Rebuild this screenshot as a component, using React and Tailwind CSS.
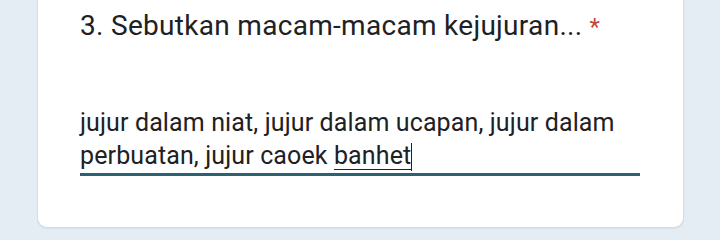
import React from "react";

function App() {
  return (
    <div className="w-[720px] h-[240px] bg-[#e3edf3] overflow-hidden" style={{ fontFamily: "Roboto, 'Liberation Sans', sans-serif" }}>
      <div className="ml-[37px] w-[647px] h-[228px] bg-white rounded-b-[10px] border border-t-0 border-[#d5dde2] shadow-[0_1px_1px_rgba(0,0,0,0.06)] pl-[42px] pr-[43px]">
        <div className="pt-[8px] text-[28px] leading-[36px] text-[#202124] tracking-[0.3px] whitespace-nowrap">
          3. Sebutkan macam-macam kejujuran...
          <span className="text-[#c5443a] ml-[7px] text-[24px]">*</span>
        </div>
        <div className="mt-[61px] text-[25px] leading-[33px] text-[#202124] tracking-[0.12px] whitespace-nowrap">
          jujur dalam niat, jujur dalam ucapan, jujur dalam
          <br />
          perbuatan, jujur caoek{" "}
          <span className="border-b border-[#202124] leading-[26px] inline-block">banhet</span>
          <span className="inline-block w-px h-[28px] bg-[#202124] align-[-7px]"></span>
        </div>
        <div className="mt-[1px] h-[3px] bg-[#2b6172]"></div>
      </div>
    </div>
  );
}

export default App;
